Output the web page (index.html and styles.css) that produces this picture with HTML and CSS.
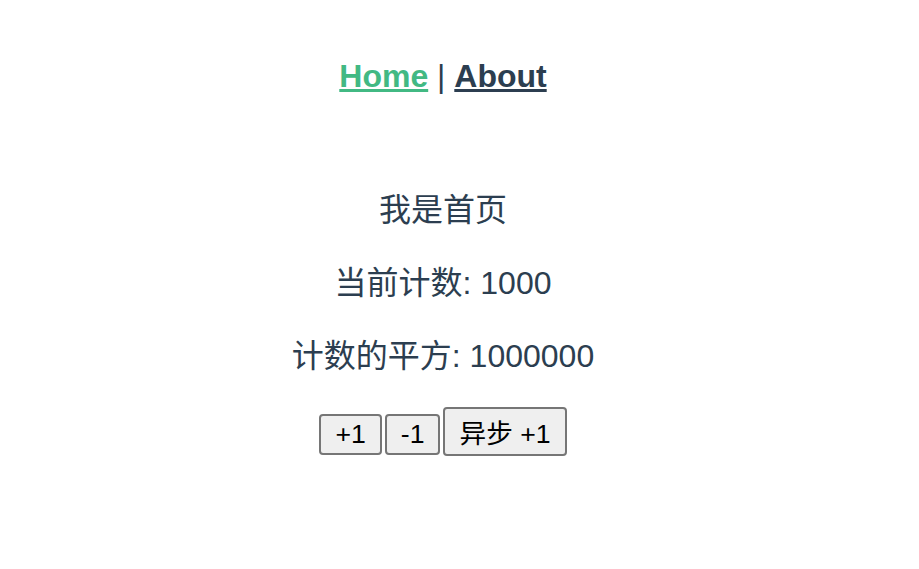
FILE: index.html
```html
<!DOCTYPE html>
<html lang="zh-CN">
<head>
<meta charset="utf-8">
<title>Home</title>
<link rel="stylesheet" href="styles.css">
</head>
<body>
<div class="app">
  <nav class="nav">
    <a class="nav-link active" href="#/">Home</a> | <a class="nav-link" href="#/about">About</a>
  </nav>
  <div class="home">
    <p class="line">我是首页</p>
    <p class="line">当前计数: 1000</p>
    <p class="line last">计数的平方: 1000000</p>
    <div class="actions"><button class="btn">+1</button><button class="btn">-1</button><button class="btn">异步 +1</button></div>
  </div>
</div>
</body>
</html>
```

FILE: styles.css
```css
html, body {
  margin: 0;
  padding: 0;
  background: #ffffff;
}

.app {
  width: 854px;
  margin: 16px;
  font-family: "Liberation Sans", Arial, "Noto Sans CJK SC", sans-serif;
  text-align: center;
  color: #2c3e50;
  font-size: 32px;
}

.nav {
  padding: 42px 0 95px;
  line-height: normal;
}

.nav-link {
  font-weight: bold;
  color: #2c3e50;
  text-decoration: underline;
}

.nav-link.active {
  color: #42b983;
}

.line {
  margin: 32px 0;
  line-height: 41px;
}

.home .line:first-child {
  margin-top: 0;
}

.home .line.last {
  margin-bottom: 30px;
}

.actions {
  display: flex;
  justify-content: center;
  align-items: baseline;
  gap: 3px;
}

.btn {
  font-family: "Liberation Sans", Arial, "Noto Sans CJK SC", sans-serif;
  font-size: 26.67px;
  color: #000000;
  background: #efefef;
  border: 2px solid #767676;
  border-radius: 4px;
  padding: 3px 14px;
  margin: 0;
}
```
